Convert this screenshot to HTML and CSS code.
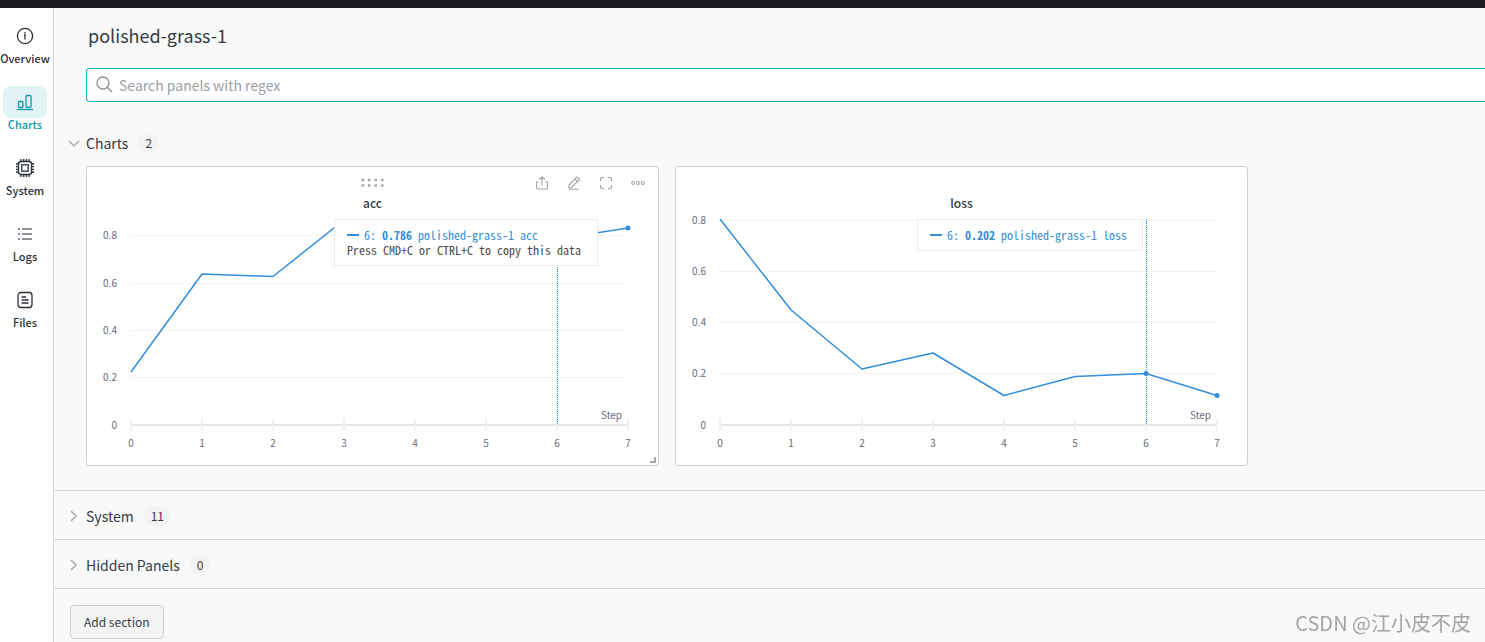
FILE: index.html
```html
<!DOCTYPE html>
<html lang="en">
<head>
<meta charset="utf-8">
<title>polished-grass-1</title>
<link rel="stylesheet" href="styles.css">
</head>
<body>
<div class="topbar"></div>
<div class="layout">
  <nav class="sidebar">
    <a class="nav-item" href="#overview">
      <span class="nav-icon"><svg width="20" height="20" viewBox="0 0 20 20"><circle cx="10" cy="10" r="7.6"/><path d="M9 9h1v4.5M10 6v1.4"/></svg></span>
      <span>Overview</span>
    </a>
    <a class="nav-item active" href="#charts">
      <span class="nav-icon"><svg width="20" height="20" viewBox="0 0 20 20"><path d="M2 17.5h16"/><rect x="3.5" y="9.5" width="4.5" height="6" rx="1"/><rect x="11" y="3.5" width="5" height="12" rx="1"/></svg></span>
      <span>Charts</span>
    </a>
    <a class="nav-item" href="#system">
      <span class="nav-icon"><svg width="20" height="20" viewBox="0 0 20 20"><rect x="3.5" y="3.5" width="13" height="13" rx="2.5"/><rect x="6.8" y="6.8" width="6.4" height="6.4"/><path d="M6 1v2.5M8.7 1v2.5M11.3 1v2.5M14 1v2.5M6 16.5V19M8.7 16.5V19M11.3 16.5V19M14 16.5V19M1 6h2.5M1 8.7h2.5M1 11.3h2.5M1 14h2.5M16.5 6H19M16.5 8.7H19M16.5 11.3H19M16.5 14H19"/></svg></span>
      <span>System</span>
    </a>
    <a class="nav-item" href="#logs">
      <span class="nav-icon"><svg class="muted" width="20" height="20" viewBox="0 0 20 20"><path d="M3 5h2M7 5h10M3 10h2M7 10h10M3 15h2M7 15h10"/></svg></span>
      <span>Logs</span>
    </a>
    <a class="nav-item" href="#files">
      <span class="nav-icon"><svg width="20" height="20" viewBox="0 0 20 20"><rect x="3" y="2.5" width="14" height="15" rx="3"/><path d="M6.5 7H11M6.5 10h7M6.5 13h7"/></svg></span>
      <span>Files</span>
    </a>
  </nav>

  <main class="content">
    <h1 class="run-name">polished-grass-1</h1>
    <label class="search">
      <svg width="17" height="20" viewBox="0 0 17 20"><circle cx="7" cy="8" r="6"/><path d="M11.3 12.3l4.700 4.700"/></svg>
      <input type="text" placeholder="Search panels with regex" aria-label="Search panels with regex">
    </label>

    <section class="section">
      <button class="section-head" type="button" aria-expanded="true">
        <svg class="chevron" width="12" height="12" viewBox="0 0 12 12"><path d="M1 4l5 5 5-5"/></svg>
        <span>Charts</span><span class="count">2</span>
      </button>
      <div class="panels">
        <article class="panel">
          <header class="panel-head">
            <svg class="grip" width="24" height="10" viewBox="0 0 24 10"><path d="M.5 2H3M7 2h2.500M13.500 2H16M20 2h2.500M.5 7.500H3M7 7.500h2.500M13.500 7.500H16M20 7.500h2.500"/></svg>
            <div class="tools">
              <button type="button" aria-label="Share"><svg width="16" height="16" viewBox="0 0 16 16"><path d="M8 10.5V2M5 4.800L8 1.800l3 3M5 7H2.500v5.500a1.500 1.500 0 0 0 1.500 1.500h8a1.500 1.500 0 0 0 1.500-1.500V7H11"/></svg></button>
              <button type="button" aria-label="Edit"><svg width="16" height="16" viewBox="0 0 16 16"><path d="M3 13v-3l7.500-7.500a1 1 0 0 1 1.500 0l1 1a1 1 0 0 1 0 1.500L5.500 12.500zM9 4l2.800 2.800M3 14.300h10"/></svg></button>
              <button type="button" aria-label="Full screen"><svg width="16" height="16" viewBox="0 0 16 16"><path d="M2.500 6V4a1.500 1.500 0 0 1 1.500-1.500h2M10 2.500h2A1.500 1.500 0 0 1 13.500 4v2M13.500 10v2a1.500 1.500 0 0 1-1.500 1.500h-2M6 13.500H4A1.500 1.500 0 0 1 2.500 12v-2"/></svg></button>
              <button type="button" aria-label="More"><svg width="16" height="16" viewBox="0 0 16 16"><circle cx="3.200" cy="8" r="1.500"/><circle cx="8" cy="8" r="1.500"/><circle cx="12.800" cy="8" r="1.500"/></svg></button>
            </div>
          </header>
          <h2 class="panel-title">acc</h2>
          <svg class="chart" viewBox="0 0 571 254" role="img" aria-label="acc by step">
            <path class="grid" d="M44 24.500h497M44 72.500h497M44 119.500h497M44 166.500h497"/>
            <path class="axis" d="M44 214h497"/>
            <path class="ticks" d="M44 208v12M115 208v12M186 208v12M257 208v12M328 208v12M399 208v12M470 208v12M541 208v12"/>
            <g class="y-labels"><text x="30" y="28">0.8</text><text x="30" y="76">0.6</text><text x="30" y="123">0.4</text><text x="30" y="170">0.2</text><text x="30" y="218">0</text></g>
            <g class="x-labels"><text x="44" y="236">0</text><text x="115" y="236">1</text><text x="186" y="236">2</text><text x="257" y="236">3</text><text x="328" y="236">4</text><text x="399" y="236">5</text><text x="470" y="236">6</text><text x="541" y="236">7</text></g>
            <text class="axis-name" x="535" y="208">Step</text>
            <path class="cursor" d="M470.500 8v206"/>
            <polyline class="line" points="44,161 115,63 186,65.500 257,9 328,20 399,24 470,28 541,17"/>
            <circle class="dot" cx="541" cy="17" r="2.500"/>
          </svg>
          <div class="tooltip tooltip-acc">
            <div class="series"><span class="swatch"></span>6: <b>0.786</b> polished-grass-1 acc</div>
            <div>Press CMD+C or CTRL+C to copy this data</div>
          </div>
          <span class="resize"></span>
        </article>

        <article class="panel">
          <header class="panel-head"></header>
          <h2 class="panel-title">loss</h2>
          <svg class="chart" viewBox="0 0 571 254" role="img" aria-label="loss by step">
            <path class="grid" d="M44 9.500h497M44 60.500h497M44 111.500h497M44 162.500h497"/>
            <path class="axis" d="M44 214h497"/>
            <path class="ticks" d="M44 208v12M115 208v12M186 208v12M257 208v12M328 208v12M399 208v12M470 208v12M541 208v12"/>
            <g class="y-labels"><text x="30" y="13">0.8</text><text x="30" y="64">0.6</text><text x="30" y="115">0.4</text><text x="30" y="166">0.2</text><text x="30" y="218">0</text></g>
            <g class="x-labels"><text x="44" y="236">0</text><text x="115" y="236">1</text><text x="186" y="236">2</text><text x="257" y="236">3</text><text x="328" y="236">4</text><text x="399" y="236">5</text><text x="470" y="236">6</text><text x="541" y="236">7</text></g>
            <text class="axis-name" x="535" y="208">Step</text>
            <polyline class="line" points="44,8 115,99 186,158 257,142 328,184.500 399,165.500 470,162.500 541,184.500"/>
            <circle class="dot" cx="470" cy="162.500" r="2.500"/>
            <circle class="dot" cx="541" cy="184.500" r="2.500"/>
            <path class="cursor" d="M470.500 8v206"/>
          </svg>
          <div class="tooltip tooltip-loss">
            <div class="series"><span class="swatch"></span>6: <b>0.202</b> polished-grass-1 loss</div>
          </div>
        </article>
      </div>
    </section>

    <section class="section">
      <button class="section-head closed" type="button" aria-expanded="false">
        <svg class="chevron" width="12" height="12" viewBox="0 0 12 12"><path d="M3 1l5 5-5 5"/></svg>
        <span>System</span><span class="count">11</span>
      </button>
    </section>
    <section class="section">
      <button class="section-head closed" type="button" aria-expanded="false">
        <svg class="chevron" width="12" height="12" viewBox="0 0 12 12"><path d="M3 1l5 5-5 5"/></svg>
        <span>Hidden Panels</span><span class="count">0</span>
      </button>
    </section>
    <button class="add-section" type="button">Add section</button>
  </main>
</div>
<div class="watermark">CSDN @江小皮不皮</div>
</body>
</html>
```
FILE: styles.css
```css
* { box-sizing: border-box; }
body {
  margin: 0;
  min-height: 100vh;
  display: flex;
  flex-direction: column;
  overflow: hidden;
  background: #f9f9f9;
  color: #363c44;
  font: 14px/20px "Noto Sans CJK SC", "Noto Sans", sans-serif;
}
button { margin: 0; padding: 0; border: 0; background: none; color: inherit; font: inherit; }
svg { display: block; fill: none; }
.topbar { height: 8px; background: #1a1c1f; }
.layout { display: flex; flex: 1; }

.sidebar {
  width: 54px;
  padding: 12px 3px 0 0;
  display: flex;
  flex-direction: column;
  align-items: center;
  gap: 16px;
  background: #fff;
  border-right: 1px solid #d4d5d9;
}
.nav-item {
  height: 50px;
  display: flex;
  flex-direction: column;
  align-items: center;
  color: #2b3038;
  font-size: 11px;
  line-height: 12px;
  font-weight: 500;
  text-decoration: none;
}
.nav-icon {
  width: 44px;
  height: 32px;
  display: grid;
  place-items: center;
  border-radius: 8px;
}
.nav-icon svg { stroke: currentColor; stroke-width: 1.3; }
.nav-icon .muted { stroke: #6b7078; }
.active { color: #0e99ab; }
.active .nav-icon { background: #e2f3f6; }

.content { flex: 1; min-width: 0; }
.run-name { margin: 14px 0 20px 34px; font-size: 18px; line-height: 26px; font-weight: 400; }
.search {
  height: 34px;
  margin: 0 0 20px 32px;
  padding-left: 9px;
  display: flex;
  align-items: center;
  gap: 6px;
  background: #fff;
  border: 1px solid #13b4c6;
  border-right: 0;
  border-radius: 4px 0 0 4px;
}
.search svg { stroke: #8f949c; stroke-width: 1.4; }
.search input { flex: 1; padding: 0; border: 0; outline: 0; background: none; color: #363c44; font: inherit; }
.search input::placeholder { color: #9a9fa8; opacity: 1; }

.section { border-bottom: 1px solid #d4d5d9; }
.section-head { height: 44px; padding: 0 0 2px 14px; display: flex; align-items: center; }
.section-head.closed { height: 48px; padding-top: 4px; }
.chevron { margin-right: 6px; stroke: #a9adb3; stroke-width: 1.5; }
.count {
  min-width: 20px;
  height: 20px;
  margin-left: 10px;
  padding: 0 7px;
  border-radius: 10px;
  background: #f3f3f3;
  font-size: 12px;
  text-align: center;
}
.panels {
  display: grid;
  grid-template-columns: repeat(2, minmax(0, 573px));
  gap: 16px;
  padding: 0 16px 24px 32px;
}
.panel { position: relative; padding-top: 4px; background: #fff; border: 1px solid #d0d1d4; border-radius: 3px; }
.panel-head { height: 24px; padding: 0 12px; display: grid; grid-template-columns: 1fr auto 1fr; align-items: center; }
.grip { grid-column: 2; stroke: #a2a5aa; stroke-width: 2.5; }
.tools { display: flex; justify-content: flex-end; gap: 16px; }
.tools svg { stroke: #a2a5aa; stroke-width: 1.1; }
.panel-title { margin: 0; font-size: 12px; line-height: 16px; font-weight: 500; text-align: center; }
.chart { width: 100%; height: auto; }
.chart text { fill: #6b6b76; font-size: 10px; }
.y-labels, .axis-name { text-anchor: end; }
.x-labels { text-anchor: middle; }
.grid { stroke: #f3f3f3; }
.axis { stroke: #e6e6e6; stroke-width: 2; }
.ticks { stroke: #f0f0f0; stroke-width: 2; }
.line { stroke: #348edb; stroke-width: 1.5; stroke-linejoin: round; }
.dot { fill: #348edb; }
.cursor { stroke: #1e90e6; stroke-dasharray: 1 1; }
.tooltip {
  position: absolute;
  top: 52px;
  padding: 7px 12px 8px;
  background: #fff;
  border: 1px solid #ececec;
  color: #4c4c4c;
  font: 12px/15px "Noto Sans Mono CJK SC", "Liberation Mono", monospace;
  white-space: nowrap;
}
.tooltip-acc { right: 60px; min-width: 264px; }
.tooltip-loss { right: 104px; min-width: 226px; }
.series { color: #348edb; }
.swatch { display: inline-block; width: 12px; height: 2px; margin-right: 5px; vertical-align: 4px; background: #348edb; }
.resize { position: absolute; right: 2px; bottom: 2px; width: 6px; height: 6px; border: solid #aaa; border-width: 0 2px 2px 0; }
.add-section {
  height: 34px;
  margin: 16px 0 0 16px;
  padding: 0 13px;
  border: 1px solid #d0d1d4;
  border-radius: 4px;
  background: #f4f4f4;
  font-size: 12px;
}
.watermark { position: fixed; right: 14px; bottom: 7px; color: #a4a4a4; font: 400 20px/24px "Liberation Sans Narrow", "Noto Sans CJK SC", sans-serif; }
```
